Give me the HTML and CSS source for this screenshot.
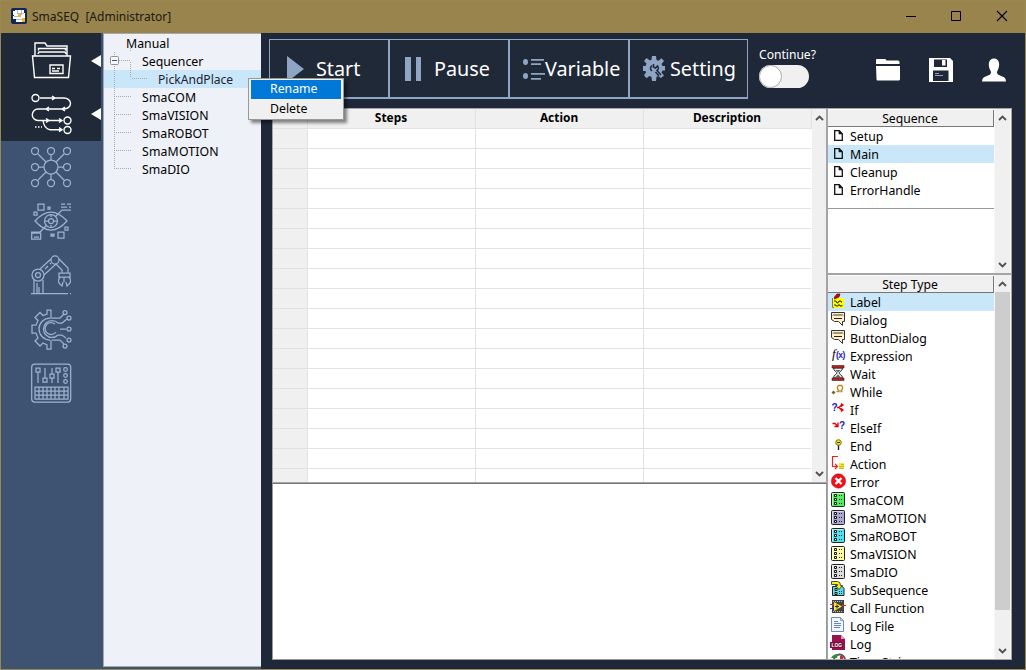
FILE: index.html
```html
<!DOCTYPE html>
<html lang="en">
<head>
<meta charset="utf-8">
<title>SmaSEQ</title>
<link rel="stylesheet" href="styles.css">
</head>
<body>
<svg width="0" height="0" class="defs"><defs>
  <g id="dialog"><path d="M1.500 1.500h13v9h-2v4l-4-4h-4l-3-2z" fill="#fff0c8" stroke="#333"/><path d="M3 4.500l1-1 1 1 1-1 1 1 1-1 1 1 1-1 1 1 1-1 1 1M4 8l1-1 1 1 1-1 1 1 1-1 1 1 1-1 1 1" fill="none" stroke="#222"/></g>
  <g id="module"><rect x="1.500" y="1.500" width="13" height="14" rx="1" fill="var(--tone)" stroke="#222"/><path d="M2.500 14V2.500H13" fill="none" stroke="#fff" stroke-opacity=".6"/><path d="M4.500 3.500h2v2h-2zM4.500 7.500h2v2h-2zM4.500 11.500h2v2h-2z" fill="#fff" stroke="#111"/><path d="M9 4.500h4M9 8.500h4M9 12.500h4" stroke="#222" stroke-dasharray="1 1"/></g>
  <path id="page" d="M.7.7h4.600l3 3v6.600H.7zM5.300.7v3h3"/>
  <path id="up" d="M1 5l3.500-3.500L8 5"/>
  <path id="down" d="M1 1l3.500 3.500L8 1"/>
</defs></svg>
<div class="window">
  <header class="titlebar">
    <svg class="app-icon" width="16" height="16" viewBox="0 0 16 16"><rect width="16" height="16" rx="2" fill="#12265c"/><path d="M4 2h9v3h1v9H5v-3H2V8h1V7H2V3h2z" fill="#fff"/><path d="M6 5.500h7M3 8.500h5M5 11.500h6M6.500 2v4M10.500 2v5" stroke="#9aa8cc" stroke-width=".8"/><path d="M7 6h3v3H7zM11 10h3v4h-3z" fill="#f0b820"/></svg>
    <span class="title">SmaSEQ&nbsp; [Administrator]</span>
    <svg class="controls" width="106" height="12" viewBox="0 0 106 12" fill="none" stroke="#000"><path d="M0 6.500h10M45.500 1.500h9v9h-9z"/><path d="M91 1l10 10M101 1L91 11" stroke-width="1.100"/></svg>
  </header>
  <div class="body">
    <nav class="rail">
      <div class="rail-item active"><svg class="ri" viewBox="0 0 40 40"><path d="M4 14V1h10l2 3h20v10M7 12l1-2h26l1 2M7.500 8.500V6.500h27v2M1.500 14h38l-2 21.500H3.500zM19 23h13v8.500H19zM21 26.500h3M26 26.500h3M21 29h7"/></svg><i class="pointer"></i></div>
      <div class="rail-item active second"><svg class="ri" viewBox="0 0 40 40"><circle cx="4.500" cy="4" r="3.500"/><path d="M9 4h24a6.500 5.500 0 0 1 0 11H7a5.500 5.500 0 0 0 0 11.500h24M21 2l3 2-3 2M18 13l-3 2 3 2M34 13l-3 2 3 2M15 24.500l3 2-3 2M28 24.500l3 2-3 2M12 26.500q1 8 7 9.200h12M28 33.700l3 2-3 2"/><circle cx="36.500" cy="26.500" r="3.500"/><circle cx="36.500" cy="36" r="3.500"/><path d="M4 33h7" stroke-dasharray="1.500 1.500"/></svg><i class="pointer"></i></div>
      <div class="rail-item"><svg class="ri" viewBox="0 0 40 40"><circle cx="20" cy="20" r="7"/><circle cx="4" cy="4" r="3.500"/><circle cx="20" cy="4" r="3.500"/><circle cx="36" cy="4" r="3.500"/><circle cx="4" cy="20" r="3.500"/><circle cx="36" cy="20" r="3.500"/><circle cx="4" cy="36" r="3.500"/><circle cx="20" cy="36" r="3.500"/><circle cx="36" cy="36" r="3.500"/><path d="M7 7l8 8M33 7l-8 8M7 33l8-8M33 33l-8-8M20 8v5M20 27v5M8 20h5M27 20h5"/></svg></div>
      <div class="rail-item"><svg class="ri" viewBox="0 0 40 40"><path d="M4 20q16-18 32 0q-16 18-32 0z"/><circle cx="20" cy="20" r="6.500"/><circle cx="20" cy="20" r="2.500"/><path d="M13 20h4M23 20h4M20 13v3M20 24v3M24 16l7-7h9M16 24l-7 7H0M30 3h4M36 3h4M30 6h6M38 6h2M7 3h6v6H7zM17 6h2v2h-2zM3 11h3v3H3zM34 26h3v3h-3zM27 31h6v6h-6zM.7 32h9v6h-9zM3 36h5M20 34h3"/><path d="M20 33h3v2h-3z"/></svg></div>
      <div class="rail-item"><svg class="ri" viewBox="0 0 40 40"><circle cx="7" cy="20" r="6"/><circle cx="7" cy="20" r="2.500"/><circle cx="24" cy="5" r="4"/><path d="M3 25v13M12 25v13M6 28v10M8 32v6M0 38.500h37M39 38.500h1M9 14L20 4M13 20L25 9M14 14l3-3M19 9l1-1M28 4l9 9v5M25 9l6 6v3M28 18h11v4H28zM29 22q-4 5 2 9l1-4M38 22q4 5-2 9l-1-4M33 22v5"/></svg></div>
      <div class="rail-item"><svg class="ri" viewBox="0 0 40 40"><path d="M20 10V1h-4v4l-4 1.500-3-3-5 5 3 3L5 16H1v8h4l2 5-3 3 5 5 3-3 4 2v4h4v-9"/><path d="M19 9a11 11 0 0 0 0 22M27 14a8.500 8.500 0 1 0 0 12M25 23a6 6 0 1 1-1-8M21 9h8l4-4M27 14h4l5-4M29 20h6M27 26h4l4 3M21 31h8l4 4"/><circle cx="34" cy="3.500" r="2"/><circle cx="38" cy="9" r="2"/><circle cx="38" cy="20" r="2"/><circle cx="38" cy="31" r="2"/><circle cx="34" cy="37" r="2"/></svg></div>
      <div class="rail-item"><svg class="ri" viewBox="0 0 40 40"><rect x=".7" y="1" width="39" height="38" rx="3"/><path d="M5 5h4v4H5zM12 15h4v4h-4zM19 11h4v4h-4zM25 5h4v4h-4zM7 9v11M14 5v10M21 5v6M21 15v5M27 9v11M4 24h33v12H4zM4 28h33M4 32h33M8 24v12M12 24v12M16 24v12M20 24v12M24 24v12M28 24v12M33 24v12"/><circle cx="34.500" cy="6.500" r="1.800"/><circle cx="34.500" cy="12.500" r="1.800"/><circle cx="34.500" cy="18.500" r="1.800"/></svg></div>
    </nav>
    <aside class="tree">
      <div class="node root">Manual</div>
      <div class="node">Sequencer</div>
      <div class="node child selected">PickAndPlace</div>
      <div class="node wide">SmaCOM</div>
      <div class="node">SmaVISION</div>
      <div class="node">SmaROBOT</div>
      <div class="node wide">SmaMOTION</div>
      <div class="node">SmaDIO</div>
      <svg class="branches" width="50" height="140" viewBox="0 0 50 140" fill="none"><path d="M10.500 18v117M15 26.500h12M26.500 14v3M26.500 28v16M28 44.500h15M12 62.500h16M12 80.500h16M12 98.500h16M12 116.500h16M12 134.500h16" stroke="#aaa" stroke-dasharray="1 1"/><rect x="6.500" y="22.500" width="8" height="8" rx="1" fill="#f7f7f7" stroke="#919191"/><path d="M8 26.500h5" stroke="#3157a8"/></svg>
    </aside>
    <main class="main">
      <div class="toolbar">
        <div class="buttons">
          <button class="btn start"><svg width="17" height="26" viewBox="0 0 17 26"><path d="M0 0l17 13L0 26z"/></svg><span>Start</span></button>
          <button class="btn pause"><svg width="16" height="24" viewBox="0 0 16 24"><path d="M0 0h6v24H0zM11 0h5v24h-5z"/></svg><span>Pause</span></button>
          <button class="btn variable"><svg width="22" height="22" viewBox="0 0 22 22"><ellipse cx="2.500" cy="4" rx="2.500" ry="3"/><ellipse cx="2.500" cy="18" rx="2.500" ry="3"/><path d="M8 1h13v1.700H8zM8 5.300h10V7H8zM8 15h14v1.700H8zM8 20h10v1.700H8z"/></svg><span>Variable</span></button>
          <button class="btn setting"><svg width="22" height="25" viewBox="0 0 22 25"><path d="M9 0h4l.5 4 2 .8 3-2.600 2.500 2.800-2.500 3 1 2H22v4.500h-2.500l-1 2 2.500 3-3 2.500-3-2-1.500.7L13 25H9l-.5-4-2-1-3 2.300L1 19.300l2-2.800L2.500 15H0v-5h2.500l1-2.500L1 5l2.500-3L7 4.500l1.500-.7z"/><path d="M10.500 8v3l2 1 2-2q2 3-.5 4.500L18 19M9 9.500q-3 3 0 5.500M12.500 16l3.500 4" fill="none" stroke="#1f2839" stroke-width="1.500"/></svg><span>Setting</span></button>
        </div>
        <div class="continue"><span>Continue?</span><div class="switch"><div class="knob"></div></div></div>
        <div class="actions">
          <svg width="24" height="23" viewBox="0 0 24 23"><path d="M0 6V2q0-1 1-1h8q1 0 1.500 1.500H22q1.500 0 1.500 1.500v2zM0 8h24v13q0 1.500-1.500 1.500h-21Q.5 22.500.5 21z"/></svg>
          <svg width="24" height="24" viewBox="0 0 24 24"><path d="M0 0h21l3 3v21H0z"/><path d="M5 1.500h13V9H5zM4 12.500h15.500V23H4z" fill="#1f2839"/><path d="M13 2h3.500v5.500H13z"/><path d="M6 15.500h4M6 17.500h8" stroke="#9aa4b1"/></svg>
          <svg width="24" height="24" viewBox="0 0 25 24"><path d="M12.500 0C6.500 0 6 7 8.500 12q2 3-.5 5L2 19.500Q0 21 0 24h25q0-3-2-4.500L17 17q-2.500-2-.5-5C19 7 18.500 0 12.500 0z"/></svg>
        </div>
      </div>
      <div class="workspace">
        <div class="left-pane">
          <div class="grid">
            <div class="cols">
              <div class="row head"><b></b><b>Steps</b><b>Action</b><b>Description</b></div>
              <div class="cells"><i></i><i></i><i></i><i></i></div>
            </div>
            <div class="scroll"><svg class="chev" viewBox="0 0 9 6"><use href="#up"/></svg><svg class="chev" viewBox="0 0 9 6"><use href="#down"/></svg></div>
          </div>
          <div class="output"></div>
        </div>
        <div class="right-pane">
          <section class="panel sequence">
            <div class="list">
              <h2>Sequence</h2>
              <div class="item"><svg class="doc" viewBox="0 0 9 11"><use href="#page"/></svg><span>Setup</span></div>
              <div class="item selected"><svg class="doc" viewBox="0 0 9 11"><use href="#page"/></svg><span>Main</span></div>
              <div class="item"><svg class="doc" viewBox="0 0 9 11"><use href="#page"/></svg><span>Cleanup</span></div>
              <div class="item"><svg class="doc" viewBox="0 0 9 11"><use href="#page"/></svg><span>ErrorHandle</span></div>
              <div class="rule"></div>
            </div>
            <div class="scroll"><svg class="chev" viewBox="0 0 9 6"><use href="#up"/></svg><svg class="chev" viewBox="0 0 9 6"><use href="#down"/></svg></div>
          </section>
          <section class="panel steps">
            <div class="list">
              <h2>Step Type</h2>
              <div class="item selected"><svg class="ic" viewBox="0 0 16 16"><path d="M2 5h12v10H2z" fill="#ff0"/><path d="M2.500 5v9.500H4" stroke="#777" fill="none"/><path d="M4 8h2v1h1v1h1V9h1V8h2v1h1M4 12h2v1h2v-1h2v1h2v-1" fill="none" stroke="#222" stroke-width=".9"/><path d="M7 1L4.500 4v2L9 4l1-3z" fill="#d00" stroke="#300" stroke-width=".6"/></svg><span>Label</span></div>
              <div class="item"><svg class="ic" viewBox="0 0 16 16"><use href="#dialog"/></svg><span>Dialog</span></div>
              <div class="item"><svg class="ic" viewBox="0 0 16 16"><use href="#dialog"/></svg><span>ButtonDialog</span></div>
              <div class="item"><svg class="ic" viewBox="0 0 16 16"><text x="2" y="11" class="fx">f</text><text x="6" y="11" class="fx2">(x)</text></svg><span>Expression</span></div>
              <div class="item"><svg class="ic" viewBox="0 0 16 16"><path d="M3.500 3c0 3 3.500 4 3.500 5s-3.500 2-3.500 5h9c0-3-3.500-4-3.500-5s3.500-2 3.500-5z" fill="#eee" stroke="#333"/><path d="M5.500 5h5L8 7.500zM5 12.500l3-3 3 3z" fill="#666"/><path d="M2 .5h12V3H2zM2 13h12v2.500H2z" fill="#c02020" stroke="#222" stroke-width=".6"/></svg><span>Wait</span></div>
              <div class="item"><svg class="ic" viewBox="0 0 16 16"><path d="M6.500 8.500H9V7.500L7.500 6V3.500l1-1h3l1 1V6L11 7.500v1h1.500" fill="none" stroke="#b98720" stroke-width="1.300"/><path d="M1.500 9.500l2-2 2 2-2 2z" fill="#776819"/></svg><span>While</span></div>
              <div class="item"><svg class="ic" viewBox="0 0 16 16"><text x="1.500" y="10" class="q">?</text><path d="M7 6.500h2L11.500 4H13M9 6.500L11.500 9H13M11 2.500L13 4l-2 1.500M11 7.500L13 9l-2 1.500" fill="none" stroke="#e00" stroke-width="1.300"/></svg><span>If</span></div>
              <div class="item"><svg class="ic" viewBox="0 0 16 16"><path d="M2.500 4.500H5l2.500 2.500M8 3.500v4H4.500" fill="none" stroke="#e00" stroke-width="1.400"/><text x="9" y="10" class="q">?</text></svg><span>ElseIf</span></div>
              <div class="item"><svg class="ic" viewBox="0 0 16 16"><path d="M8.500 8v5" stroke="#222" stroke-width="1.400"/><circle cx="8.500" cy="5.500" r="2.800" fill="#f4e11c" stroke="#777500"/><path d="M7 5.500h3" stroke="#333"/></svg><span>End</span></div>
              <div class="item"><svg class="ic" viewBox="0 0 16 16"><path d="M8 1.500H2.500v10H7M5 9l2.500 2.500L5 14" fill="none" stroke="#ef1d25" stroke-width="1.200"/><path d="M9 8h5v6H9z" fill="#f3e829"/><path d="M11 9.500h3M9 11.500h5M9 13.500h5" stroke="#b5a520" stroke-width=".7"/></svg><span>Action</span></div>
              <div class="item"><svg class="ic" viewBox="0 0 16 16"><circle cx="8.500" cy="8" r="7.200" fill="#f01018" stroke="#a20c12" stroke-width=".5"/><path d="M5.500 5l6 6M11.500 5l-6 6" stroke="#fff" stroke-width="2.300"/></svg><span>Error</span></div>
              <div class="item wide m-green"><svg class="ic" viewBox="0 0 16 16"><use href="#module"/></svg><span>SmaCOM</span></div>
              <div class="item wide m-violet"><svg class="ic" viewBox="0 0 16 16"><use href="#module"/></svg><span>SmaMOTION</span></div>
              <div class="item m-cyan"><svg class="ic" viewBox="0 0 16 16"><use href="#module"/></svg><span>SmaROBOT</span></div>
              <div class="item m-yellow"><svg class="ic" viewBox="0 0 16 16"><use href="#module"/></svg><span>SmaVISION</span></div>
              <div class="item m-gray"><svg class="ic" viewBox="0 0 16 16"><use href="#module"/></svg><span>SmaDIO</span></div>
              <div class="item m-cyan"><svg class="ic" viewBox="0 0 16 16"><path d="M2.500 5.500h10l1.500 2v7H2.500z" fill="var(--tone)" stroke="#222"/><path d="M5 7.500h2v2H5zM5 11.500h2v2H5z" fill="#fff" stroke="#111"/><path d="M9 10.500h4M9 12.500h4" stroke="#222" stroke-dasharray="1 1"/><path d="M1.500.5h6q3 0 3 4h2L9 8.500 5.500 4.500h2v-1h-6z" fill="#ffed1a" stroke="#222" stroke-width=".8"/></svg><span>SubSequence</span></div>
              <div class="item"><svg class="ic" viewBox="0 0 16 16"><path d="M2 1h12v13H2z" fill="#444"/><path d="M3 2.500h10M3 12.500h10" stroke="#bbb" stroke-dasharray="1 1"/><path d="M4 3l8 4.500L4 12z" fill="#ffe62b"/><path d="M5 7.500h4M7 5.500v4" stroke="#222"/><path d="M0 5.500h4M12 6.500h4" stroke="#e22"/><path d="M0 9.500h4" stroke="#12d"/></svg><span>Call Function</span></div>
              <div class="item"><svg class="ic" viewBox="0 0 16 16"><path d="M1.500.5h9l3 3v11h-12z" fill="#f2f6ff" stroke="#7189c6"/><path d="M10.500.5v3h3" fill="#b8c7ed" stroke="#7189c6" stroke-width=".7"/><path d="M4 4.500h4M4 6.500h7M4 8.500h7M4 10.500h6" stroke="#6681c4"/></svg><span>Log File</span></div>
              <div class="item"><svg class="ic" viewBox="0 0 16 16"><path d="M2 0h9l4 4v11H2z" fill="#98134e"/><path d="M11 0l4 4h-4z" fill="#d7a0b9"/><path d="M0 7h13v6H0z" fill="#771040"/><text x="1.500" y="12" class="logt">LOG</text></svg><span>Log</span></div>
              <div class="item"><svg class="ic" viewBox="0 0 16 16"><circle cx="9.500" cy="7" r="5.500" fill="#fff" stroke="#555" stroke-width="2"/><path d="M1 5q2-4 7-4l-1 4z" fill="#348b42"/><path d="M10 3h3v5h-3z" fill="#d42a2a"/></svg><span>Time String</span></div>
            </div>
            <div class="scroll"><svg class="chev" viewBox="0 0 9 6"><use href="#up"/></svg><div class="thumb"></div><svg class="chev" viewBox="0 0 9 6"><use href="#down"/></svg></div>
          </section>
        </div>
      </div>
    </main>
  </div>
  <div class="menu"><div class="menu-item hot">Rename</div><div class="menu-item">Delete</div></div>
</div>
</body>
</html>
```
FILE: styles.css
```css
* { box-sizing: border-box; }
body { margin: 0; font: 12.300px/18px "Noto Sans", "Open Sans", sans-serif; color: #000; overflow: hidden; }
.defs { position: absolute; }
.window { position: relative; width: 1026px; height: 670px; border: 1px solid #9b8750; display: flex; flex-direction: column; background: #1f2839; }
.titlebar { height: 32px; flex: none; background: #99844e; display: flex; align-items: center; padding: 0 13px 0 10px; }
.title { margin-left: 5px; flex: 1; color: #1c190f; font-size: 12px; }
.controls { width: 106px; margin-top: -2px; }
.app-icon { margin-top: -2px; }
.body { position: relative; display: flex; flex: 1; min-height: 0; }
.body::before { content: ""; position: absolute; left: 0; bottom: 0; width: 260px; height: 3px; background: #3e5271; }
.rail { width: 102px; background: #3e5271; flex: none; }
.rail-item { width: 100px; height: 54px; display: flex; align-items: center; padding: 0 0 2px 30px; position: relative; }
.rail-item.active { background: #1f2937; }
.rail-item.active:first-child { padding: 4px 0 0 30px; }
.rail-item.second { padding-bottom: 1px; }
.ri { width: 40px; height: 40px; fill: none; stroke: #9db2d0; stroke-width: 1.250; overflow: visible; }
.active .ri { stroke: #fff; stroke-width: 1.400; }
.pointer { position: absolute; right: 0; top: 22px; border: solid transparent; border-width: 6px 10px 6px 0; border-right-color: #fff; }
.second .pointer { top: 21px; }
.tree { position: relative; width: 158px; height: 634px; flex: none; background: #eef1f7; border: solid #a5a8ad; border-width: 1px 0 1px 1px; }
.node { height: 18px; padding-left: 38px; line-height: 20px; }
.node.root { padding-left: 22px; }
.node.child { padding-left: 54px; font-size: 12.100px; color: #223; }
.node.wide, .item.wide { letter-spacing: .15px; }
.selected { background: #c9e7f8; }
.branches { position: absolute; left: 0; top: 0; }
.main { flex: 1; min-width: 0; padding: 6px 13px 9px 8px; display: flex; flex-direction: column; }
.toolbar { height: 69px; display: flex; flex: none; }
.buttons { display: flex; width: 479px; height: 60px; border: 1px solid #8fa5c4; border-width: 1px 1px 2px; }
.btn { width: 120px; flex: none; border: 0; border-right: 2px solid #8fa5c4; background: #1f2937; color: #fff; font: 19.800px/24px "Noto Sans", sans-serif; display: flex; align-items: center; padding: 0; white-space: nowrap; }
.btn:last-child { border-right: 0; width: 117px; }
.btn svg { fill: #8fa5c4; flex: none; }
.start svg { margin: 0 12px 0 17px; }
.pause svg { margin: 0 13px 0 15px; }
.variable svg { margin-left: 13px; }
.setting svg { margin: 0 5px 0 13px; }
.continue { margin: 7px 0 0 11px; width: 117px; color: #fff; font-size: 12.100px; }
.continue span { display: block; line-height: 17px; }
.switch { margin-top: 2px; width: 50px; height: 23px; border-radius: 12px; background: #f0f0f0; }
.knob { width: 23px; height: 23px; border-radius: 50%; background: #fff; border: 1px solid #aaa; }
.actions { display: flex; gap: 29px; padding-top: 19px; fill: #fff; }
.workspace { display: flex; flex: 1; min-height: 0; margin-left: 3px; }
.left-pane { width: 555px; flex: none; display: flex; flex-direction: column; }
.grid { height: 375px; display: flex; background: #fff; border: 1px solid #a5a5a9; }
.cols { width: 539px; flex: none; display: flex; flex-direction: column; }
.row { display: grid; grid-template-columns: 35px 168px 168px 168px; flex: none; height: 20px; background: #f0f0f0; border-bottom: 1px solid #e2e2e2; }
.row b { border-right: 1px solid #e2e2e2; text-align: center; line-height: 16px; font-size: 11.900px; padding-right: 1px; }
.cells { flex: 1; display: grid; grid-template-columns: 35px 168px 168px 168px; background: repeating-linear-gradient(transparent 0 19px, #e2e2e2 19px 20px); }
.cells i { border-right: 1px solid #e2e2e2; }
.cells i:last-child { border-right: 1px solid #fff; }
.cells i:first-child { background: repeating-linear-gradient(#f0f0f0 0 19px, #e2e2e2 19px 20px); }
.scroll { flex: 1; background: #f0f0f0; display: flex; flex-direction: column; align-items: center; justify-content: space-between; padding: 6px 0 5px; }
.chev { width: 9px; height: 6px; fill: none; stroke: #505050; stroke-width: 1.800; flex: none; }
.output { flex: 1; background: #fff; border: 1px solid #999; border-top-color: #777; }
.right-pane { width: 185px; flex: none; display: flex; flex-direction: column; }
.panel { display: flex; background: #fff; border: 1px solid #a5a5a9; overflow: hidden; }
.sequence { height: 166px; flex: none; }
.steps { flex: 1; min-height: 0; }
.list { width: 166px; flex: none; overflow: hidden; }
.list h2 { margin: 1px 0 0; font: 12.200px/17px "Noto Sans", sans-serif; height: 17px; text-align: center; background: #f0f0f0; border: solid #777; border-width: 0 1px 1px 0; padding-right: 1px; }
.item { height: 18px; display: flex; align-items: center; }
.item span { line-height: 16px; padding-top: 2px; }
.panel .scroll { border: solid #f7f7f7; border-width: 0 1px 0 1px; }
.doc { width: 9px; height: 11px; margin: 0 7px 2px 6px; fill: none; stroke: #111; stroke-width: 1.300; }
.ic { width: 16px; height: 16px; margin: 0 4px 2px 2px; flex: none; }
.rule { margin-top: 9px; border-top: 1px solid #999; }
.steps .scroll { justify-content: flex-start; }
.thumb { width: 15px; height: 318px; margin: 5px 0 auto; background: #cdcdcd; flex: none; }
.fx { font: italic 13px "Liberation Serif", serif; }
.fx2 { font: bold 8.500px "Liberation Sans", sans-serif; fill: #22c; letter-spacing: -.5px; }
.q { font: bold 10px "Liberation Sans", sans-serif; fill: #12c; }
.logt { font: bold 4.800px "Liberation Sans", sans-serif; fill: #fff; }
.m-green { --tone: #51ee60; }
.m-violet { --tone: #a8a8d0; }
.m-cyan { --tone: #4de2ed; }
.m-yellow { --tone: #ffffa0; }
.m-gray { --tone: #ddd; }
.menu { position: absolute; left: 247px; top: 77px; width: 96px; height: 42px; padding: 1px 2px; background: #f0f0f0; border: 1px solid #999; box-shadow: 3px 3px 3px #0007; }
.menu-item { height: 19px; line-height: 19px; padding-left: 19px; }
.hot { background: #0078d7; color: #fff; line-height: 18px; }
```
